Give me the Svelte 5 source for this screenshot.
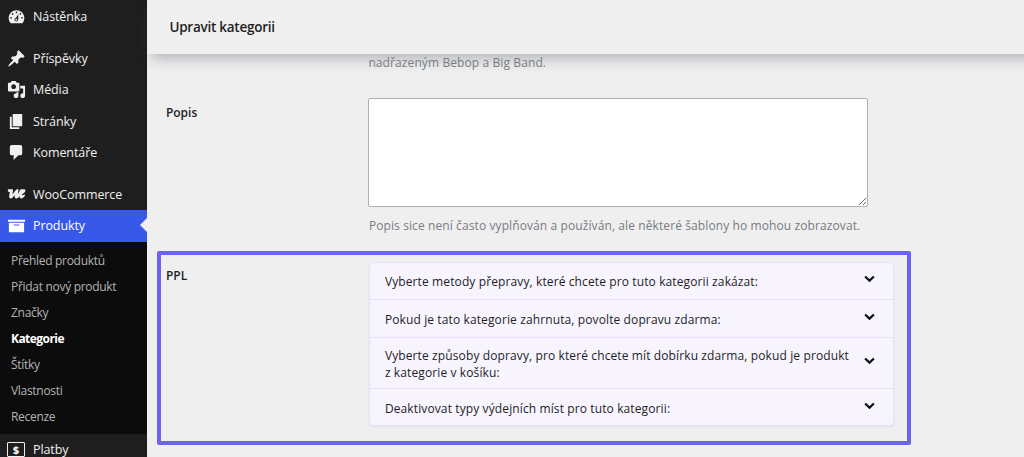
<script lang="ts">
  type Item = { icon: string; label: string; gap?: boolean }

  const items: Item[] = [
    { icon: 'dashboard', label: 'Nástěnka' },
    { icon: 'post', label: 'Příspěvky', gap: true },
    { icon: 'media', label: 'Média' },
    { icon: 'page', label: 'Stránky' },
    { icon: 'comments', label: 'Komentáře' },
    { icon: 'woo', label: 'WooCommerce', gap: true },
    { icon: 'archive', label: 'Produkty' }
  ]

  const submenu = [
    'Přehled produktů',
    'Přidat nový produkt',
    'Značky',
    'Kategorie',
    'Štítky',
    'Vlastnosti',
    'Recenze'
  ]

  const panels = [
    'Vyberte metody přepravy, které chcete pro tuto kategorii zakázat:',
    'Pokud je tato kategorie zahrnuta, povolte dopravu zdarma:',
    'Vyberte způsoby dopravy, pro které chcete mít dobírku zdarma, pokud je produkt\nz kategorie v košíku:',
    'Deaktivovat typy výdejních míst pro tuto kategorii:'
  ]

  const paths: Record<string, string> = {
    post: 'M10.44 3.02l1.82-1.82 6.36 6.35-1.83 1.82c-1.05-.68-2.48-.57-3.41.36l-.75.75c-.92.93-1.04 2.35-.35 3.41l-1.83 1.82-2.41-2.41-2.8 2.79c-.42.42-3.38 2.71-3.8 2.29s1.86-3.39 2.28-3.81l2.79-2.79L4.1 9.36l1.83-1.82c1.05.69 2.48.57 3.4-.36l.75-.75c.93-.92 1.05-2.35.36-3.41z',
    media:
      'M13 11V4c0-.55-.45-1-1-1h-1.67L9 1H5L3.67 3H2c-.55 0-1 .45-1 1v7c0 .55.45 1 1 1h10c.55 0 1-.45 1-1zM7 4.5c1.38 0 2.5 1.12 2.5 2.5S8.38 9.5 7 9.5 4.5 8.38 4.5 7 5.62 4.5 7 4.5zM14 6h5v10.5c0 1.38-1.12 2.5-2.5 2.5S14 17.88 14 16.5s1.12-2.5 2.5-2.5c.17 0 .34.02.5.05V9h-3V6zm-4 8.05V13h2v3.5c0 1.38-1.12 2.5-2.5 2.5S7 17.88 7 16.5 8.12 14 9.5 14c.17 0 .34.02.5.05z',
    page: 'M6 15V2h10v13H6zm-1 1h8v2H3V5h2v11z',
    comments:
      'M5 2h9c1.1 0 2 .9 2 2v7c0 1.1-.9 2-2 2h-2l-5 5v-5H5c-1.1 0-2-.9-2-2V4c0-1.1.9-2 2-2z',
    woo: 'M1 4.6h4.6c.6 0 .9.4.8 1l-.7 4.3 3.6-4.6c.4-.5.8-.7 1.4-.7h1.5l-.9 5.3 2.2-4.2c.4-.8.9-1.1 1.7-1.1h2.4c1.3 0 2 .7 1.7 1.7-.4 1.4-1.7 2.4-3.2 3.1-.2.9 0 1.3.5 1.3.6 0 1.1-.3 1.7-.9l.8.9c-1.2 1.9-2.4 3.5-4.1 3.5-1.4 0-2-.9-1.8-2.5-1 1.6-2 2.5-3.2 2.5-1.6 0-2.2-1.2-2-3.7-1.3 2-2.7 3.7-4.1 3.7-1.5 0-1.8-1.4-1.5-3.4l.6-3.5H2.2C1.4 7.3.9 6.8.9 5.9z',
    archive: 'M19 4v2H1V4h18zM2 7h16v10H2V7zm11 3V9H7v1h6z'
  }
</script>

{#snippet icon(name: string)}
  <svg class="icon" viewBox="0 0 20 20">
    {#if name === 'dashboard'}
      <path d="M3.8 17A8.3 8.3 0 0 1 1.7 11.6a8.3 8.3 0 0 1 16.6 0A8.3 8.3 0 0 1 16.2 17z" />
      <g class="cut">
        <circle cx="10" cy="5.6" r=".9" />
        <circle cx="5.9" cy="7.3" r=".9" />
        <circle cx="14.1" cy="7.3" r=".9" />
        <circle cx="4.2" cy="11.4" r=".9" />
        <circle cx="15.8" cy="11.4" r=".9" />
        <path d="M11.9 7.6l-.1 6.2a2 2 0 1 1-2.3-2.4z" />
      </g>
      <circle cx="9.8" cy="13.4" r="1.1" />
    {:else}
      <path d={paths[name]} />
    {/if}
  </svg>
{/snippet}

<div class="page">
  <nav class="sidebar">
    {#each items as item}
      <div class="item" class:gap={item.gap} class:current={item.label === 'Produkty'}>
        {@render icon(item.icon)}
        <span class="label">{item.label}</span>
      </div>
    {/each}
    <div class="submenu">
      {#each submenu as entry}
        <div class="entry" class:active={entry === 'Kategorie'}><span>{entry}</span></div>
      {/each}
    </div>
    <div class="item last">
      <div class="money">$</div>
      <span class="label">Platby</span>
    </div>
  </nav>

  <main>
    <header><h1>Upravit kategorii</h1></header>
    <div class="form">
      <p class="hint parent-hint">nadřazeným Bebop a Big Band.</p>
      <div class="row">
        <label for="description">Popis</label>
        <div class="field">
          <textarea id="description"></textarea>
          <p class="hint">
            Popis sice není často vyplňován a používán, ale některé šablony ho mohou zobrazovat.
          </p>
        </div>
      </div>
      <div class="row framed">
        <div class="name">PPL</div>
        <div class="accordion">
          {#each panels as panel}
            <div class="panel">
              <span class="text">{panel}</span>
              <svg class="chevron" viewBox="0 0 10 7"><path d="M1 1.2l4 3.8 4-3.8" /></svg>
            </div>
          {/each}
        </div>
      </div>
    </div>
  </main>
</div>

<style>
  :global(body) {
    background: #efefef;
    overflow: hidden;
  }

  .page {
    display: flex;
    height: 457px;
    overflow: hidden;
    font-family: 'Open Sans', 'Noto Sans', sans-serif;
    font-size: 12px;
    color: #2c3338;
  }

  .sidebar {
    box-sizing: border-box;
    width: 147.4px;
    flex: none;
    padding-top: 1.2px;
    background: #1e1e1e;
    color: #f0f0f1;
  }

  .item {
    display: flex;
    align-items: center;
    box-sizing: border-box;
    height: 31.4px;
    padding-left: 7px;
    font-size: 12.5px;
    line-height: 14px;
    letter-spacing: -0.1px;
  }

  .label {
    padding-top: 0.7px;
  }

  .item.gap {
    margin-top: 10.3px;
  }

  .item.current {
    position: relative;
    background: #3858e9;
    color: #fff;
  }

  .item.current::after {
    content: '';
    position: absolute;
    right: 0;
    top: 8px;
    border: 7.5px solid transparent;
    border-left-width: 0;
    border-right-color: #efefef;
  }

  .item.last {
    height: 31px;
  }

  .icon {
    width: 19px;
    height: 19px;
    margin-right: 7px;
    fill: currentColor;
  }

  .cut {
    fill: #1e1e1e;
  }

  .money {
    display: flex;
    align-items: center;
    justify-content: center;
    box-sizing: border-box;
    width: 18px;
    height: 15px;
    margin-right: 8px;
    border: 1.5px solid #f0f0f1;
    border-radius: 1px;
    font-size: 10.5px;
    line-height: 12px;
    font-weight: 800;
  }

  .submenu {
    box-sizing: border-box;
    height: 192.5px;
    padding: 5.8px 0 0 11px;
    background: #0c0c0c;
    color: #b4b4b5;
  }

  .entry {
    display: flex;
    align-items: center;
    height: 26px;
    letter-spacing: -0.3px;
  }

  .entry.active {
    color: #fff;
    font-weight: 700;
    letter-spacing: -0.55px;
  }

  main {
    flex: 1;
    min-width: 0;
  }

  header {
    display: flex;
    align-items: center;
    box-sizing: border-box;
    height: 54px;
    margin-right: -24px;
    padding-left: 22px;
    background: #efefef;
    box-shadow: 0 8px 14px -4px rgba(60, 67, 80, 0.36);
  }

  h1 {
    margin: 0;
    font-size: 13.5px;
    font-weight: 600;
    letter-spacing: -0.25px;
    color: #1e1e1e;
  }

  .form {
    padding-left: 10px;
  }

  .hint {
    margin: 0;
    line-height: 18px;
    letter-spacing: 0.1px;
    color: #787c82;
    white-space: nowrap;
  }

  .parent-hint {
    padding: 0 0 26px 211px;
  }

  .row {
    display: flex;
  }

  label,
  .name {
    width: 203px;
    flex: none;
    padding: 6px 0 0 8.5px;
    box-sizing: border-box;
    line-height: 18px;
    font-weight: 600;
    color: #1d2327;
  }

  .field {
    padding-left: 8px;
  }

  .field .hint {
    padding-left: 0.5px;
  }

  textarea {
    display: block;
    box-sizing: border-box;
    width: 500px;
    height: 109px;
    margin: 0 0 10px;
    border: 1px solid #b0b0b2;
    border-radius: 2px;
    background: #fff;
  }

  .framed {
    box-sizing: border-box;
    width: 754px;
    height: 194px;
    margin: 16px 0 0 -0.5px;
    padding: 6.5px 0 0;
    border: 4px solid #6c63ef;
    border-radius: 2px;
  }

  .framed .name {
    width: 208px;
    padding: 5px 0 0 5px;
  }

  .accordion {
    box-sizing: border-box;
    width: 525px;
    height: 164.5px;
    border: 1px solid #e6e0fb;
    border-radius: 4px;
    background: #f7f4fe;
    box-shadow: 0 1px 2px rgba(90, 70, 180, 0.08);
  }

  .panel {
    display: flex;
    align-items: center;
    justify-content: space-between;
    box-sizing: border-box;
    min-height: 37.5px;
    padding: 8px 18px 7px 15px;
    border-bottom: 1px solid #e6e0fb;
    line-height: 17px;
    letter-spacing: 0.115px;
    color: #1e1e1e;
  }

  .panel:last-child {
    border-bottom: 0;
  }

  .text {
    padding-top: 1px;
    white-space: pre;
  }

  .chevron {
    width: 11px;
    height: 8px;
    margin-bottom: 4px;
    fill: none;
    stroke: #111;
    stroke-width: 2;
  }
</style>
